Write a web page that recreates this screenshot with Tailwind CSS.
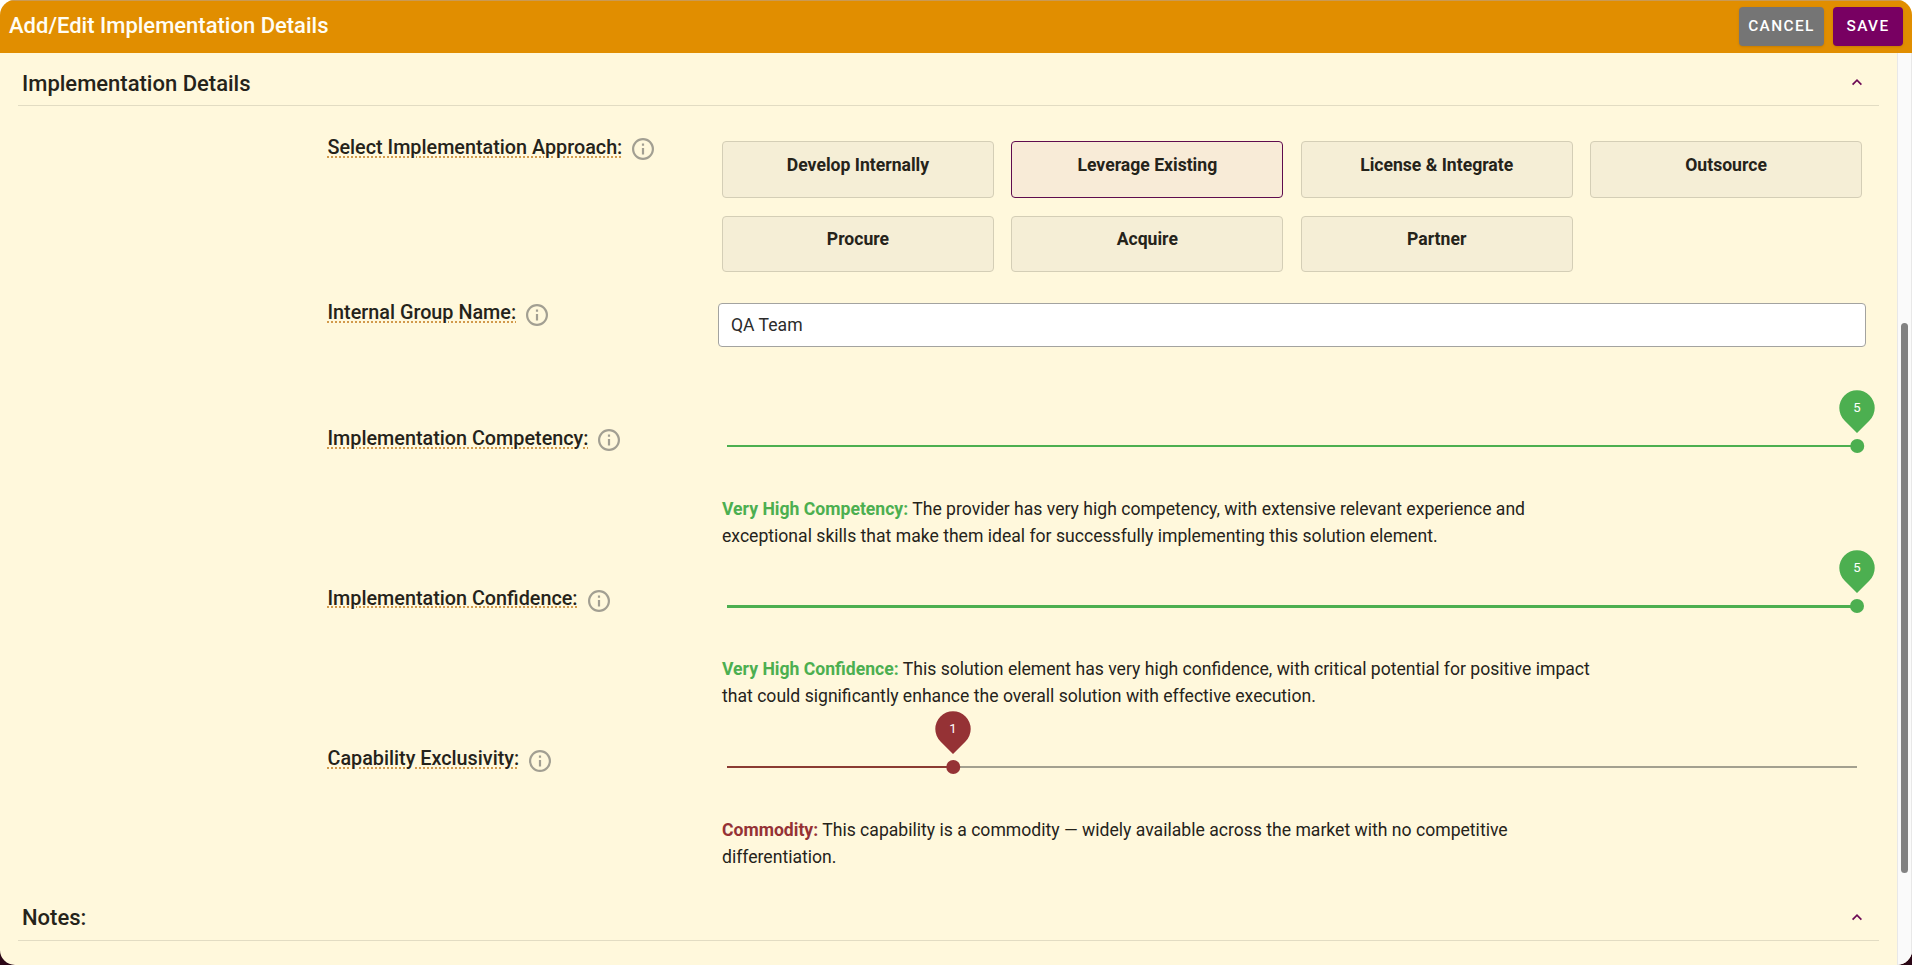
<!DOCTYPE html>
<html lang="en">
<head>
    <meta charset="UTF-8">
    <meta name="viewport" content="width=device-width, initial-scale=1.0">
    <title>Add/Edit Implementation Details</title>
    <script src="https://cdn.jsdelivr.net/npm/@tailwindcss/browser@4"></script>
</head>
<body class="h-[965px] overflow-hidden bg-[linear-gradient(to_bottom,#ffffff_50%,#2b0716_50%)] font-['Roboto',sans-serif] text-[#25231a]">
    <div class="flex h-[965px] flex-col overflow-hidden rounded-[15px] bg-[#fff8dc]">

        <!-- Toolbar -->
        <header class="flex h-[53px] shrink-0 items-start justify-between border-t border-[#c99a55] bg-[#e18e00] pr-[9px] pl-[9px]">
            <h1 class="mt-[11px] text-[22px] leading-[28px] font-medium text-[#fffdf4]">Add/Edit Implementation Details</h1>
            <div class="mt-[6px] flex gap-[9px]">
                <button class="h-[39px] w-[85px] rounded-[4px] bg-[#757575] text-[15.4px] font-medium tracking-[1.4px] text-white shadow">CANCEL</button>
                <button class="h-[39px] w-[70px] rounded-[4px] bg-[#780062] text-[15.4px] font-medium tracking-[1.4px] text-white shadow">SAVE</button>
            </div>
        </header>

        <div class="flex min-h-0 flex-1">
            <main class="w-[1897px] shrink-0">
                <!-- Implementation Details -->
                <div class="mr-[18px] ml-[18px] flex h-[53px] justify-between border-b border-[#e2dcc3] pr-[16px] pl-[4px]">
                    <h2 class="mt-[17px] text-[22px] leading-[28px] font-medium">Implementation Details</h2>
                    <svg class="mt-[25px] h-[8px] w-[12px]" viewBox="0 0 12 8" fill="none" stroke="#6d0a55" stroke-width="1.7"><path d="M1.6 6.6 6 2.2l4.4 4.4"/></svg>
                </div>

                <div class="flex h-[182px] pl-[327.5px]">
                    <div class="flex w-[394.5px] pt-[30px]">
                        <span class="text-[19.8px] leading-[24px] font-medium underline decoration-[#d29a4c] decoration-dotted decoration-[2px] underline-offset-[2px]">Select Implementation Approach:</span>
                        <svg class="mt-[2px] ml-[10px] size-[22px]" viewBox="2 2 20 20" fill="#a29f92"><path d="M11 9h2V7h-2m1 13c-4.41 0-8-3.59-8-8s3.59-8 8-8 8 3.59 8 8-3.59 8-8 8m0-18A10 10 0 0 0 2 12a10 10 0 0 0 10 10 10 10 0 0 0 10-10A10 10 0 0 0 12 2m-1 15h2v-6h-2v6z"/></svg>
                    </div>
                    <div class="grid w-[1140px] grid-cols-4 grid-rows-[57px_56px] gap-x-[17.5px] gap-y-[18px] pt-[35px] text-center text-[17.6px] leading-[24px] font-bold">
                        <div class="rounded-[4px] border border-[#d4ceb6] bg-[#f5eed6] pt-[11px]">Develop Internally</div>
                        <div class="rounded-[4px] border border-[#5f0c4e] bg-[#f8ebd7] pt-[11px]">Leverage Existing</div>
                        <div class="rounded-[4px] border border-[#d4ceb6] bg-[#f5eed6] pt-[11px]">License &amp; Integrate</div>
                        <div class="rounded-[4px] border border-[#d4ceb6] bg-[#f5eed6] pt-[11px]">Outsource</div>
                        <div class="rounded-[4px] border border-[#d4ceb6] bg-[#f5eed6] pt-[10px]">Procure</div>
                        <div class="rounded-[4px] border border-[#d4ceb6] bg-[#f5eed6] pt-[10px]">Acquire</div>
                        <div class="rounded-[4px] border border-[#d4ceb6] bg-[#f5eed6] pt-[10px]">Partner</div>
                    </div>
                </div>

                <div class="flex h-[102px] pl-[327.5px]">
                    <div class="flex w-[390.5px] pt-[13px]">
                        <span class="text-[19.8px] leading-[24px] font-medium underline decoration-[#d29a4c] decoration-dotted decoration-[2px] underline-offset-[2px]">Internal Group Name:</span>
                        <svg class="mt-[3px] ml-[10px] size-[22px]" viewBox="2 2 20 20" fill="#a29f92"><path d="M11 9h2V7h-2m1 13c-4.41 0-8-3.59-8-8s3.59-8 8-8 8 3.59 8 8-3.59 8-8 8m0-18A10 10 0 0 0 2 12a10 10 0 0 0 10 10 10 10 0 0 0 10-10A10 10 0 0 0 12 2m-1 15h2v-6h-2v6z"/></svg>
                    </div>
                    <input type="text" value="QA Team" class="mt-[15px] h-[44px] w-[1148px] rounded-[4px] border border-[#a3a3a0] bg-white px-[12px] pb-[1px] text-[17.6px] text-[#2b2b2b]">
                </div>

                <!-- Implementation Competency -->
                <div class="flex h-[160.5px] pl-[327.5px]">
                    <div class="flex w-[394.5px] pt-[37px]">
                        <span class="h-[24px] text-[19.8px] leading-[24px] font-medium underline decoration-[#d29a4c] decoration-dotted decoration-[2px] underline-offset-[2px]">Implementation Competency:</span>
                        <svg class="mt-[2px] ml-[10px] size-[22px]" viewBox="2 2 20 20" fill="#a29f92"><path d="M11 9h2V7h-2m1 13c-4.41 0-8-3.59-8-8s3.59-8 8-8 8 3.59 8 8-3.59 8-8 8m0-18A10 10 0 0 0 2 12a10 10 0 0 0 10 10 10 10 0 0 0 10-10A10 10 0 0 0 12 2m-1 15h2v-6h-2v6z"/></svg>
                    </div>
                    <div class="w-[1136px]">
                        <div class="relative mt-[55px] ml-[5px] h-[2px] w-[1130px] bg-[#4caf50]">
                            <span class="absolute -top-[6px] left-full size-[13.5px] -translate-x-1/2 rounded-full bg-[#4caf50]"></span>
                            <svg class="absolute -top-[55px] left-full h-[44px] w-[36px] -translate-x-1/2" viewBox="0 0 36 44"><path fill="#4caf50" d="M18 43 5.5 30.5a17.7 17.7 0 1 1 25 0z"/></svg>
                            <span class="absolute -top-[47px] left-full w-[36px] -translate-x-1/2 text-center text-[13.2px] leading-[20px] text-white">5</span>
                        </div>
                        <p class="mt-[49px] w-[880px] text-[17.6px] leading-[26.6px]"><b class="font-bold text-[#4caf50]">Very High Competency:</b> The provider has very high competency, with extensive relevant experience and exceptional skills that make them ideal for successfully implementing this solution element.</p>
                    </div>
                </div>

                <!-- Implementation Confidence -->
                <div class="flex h-[160.5px] pl-[327.5px]">
                    <div class="flex w-[394.5px] pt-[36px]">
                        <span class="h-[24px] text-[19.8px] leading-[24px] font-medium underline decoration-[#d29a4c] decoration-dotted decoration-[2px] underline-offset-[2px]">Implementation Confidence:</span>
                        <svg class="mt-[3px] ml-[10px] size-[22px]" viewBox="2 2 20 20" fill="#a29f92"><path d="M11 9h2V7h-2m1 13c-4.41 0-8-3.59-8-8s3.59-8 8-8 8 3.59 8 8-3.59 8-8 8m0-18A10 10 0 0 0 2 12a10 10 0 0 0 10 10 10 10 0 0 0 10-10A10 10 0 0 0 12 2m-1 15h2v-6h-2v6z"/></svg>
                    </div>
                    <div class="w-[1136px]">
                        <div class="relative mt-[54.5px] ml-[5px] h-[3px] w-[1130px] bg-[#4caf50]">
                            <span class="absolute -top-[6px] left-full size-[14px] -translate-x-1/2 rounded-full bg-[#4caf50]"></span>
                            <svg class="absolute -top-[55px] left-full h-[44px] w-[36px] -translate-x-1/2" viewBox="0 0 36 44"><path fill="#4caf50" d="M18 43 5.5 30.5a17.7 17.7 0 1 1 25 0z"/></svg>
                            <span class="absolute -top-[47px] left-full w-[36px] -translate-x-1/2 text-center text-[13.2px] leading-[20px] text-white">5</span>
                        </div>
                        <p class="mt-[48.4px] w-[880px] text-[17.6px] leading-[26.4px]"><b class="font-bold text-[#4caf50]">Very High Confidence:</b> This solution element has very high confidence, with critical potential for positive impact that could significantly enhance the overall solution with effective execution.</p>
                    </div>
                </div>

                <!-- Capability Exclusivity -->
                <div class="flex h-[161px] pl-[327.5px]">
                    <div class="flex w-[394.5px] pt-[36px]">
                        <span class="h-[24px] text-[19.8px] leading-[24px] font-medium underline decoration-[#d29a4c] decoration-dotted decoration-[2px] underline-offset-[2px]">Capability Exclusivity:</span>
                        <svg class="mt-[3px] ml-[10px] size-[22px]" viewBox="2 2 20 20" fill="#a29f92"><path d="M11 9h2V7h-2m1 13c-4.41 0-8-3.59-8-8s3.59-8 8-8 8 3.59 8 8-3.59 8-8 8m0-18A10 10 0 0 0 2 12a10 10 0 0 0 10 10 10 10 0 0 0 10-10A10 10 0 0 0 12 2m-1 15h2v-6h-2v6z"/></svg>
                    </div>
                    <div class="w-[1136px]">
                        <div class="relative mt-[55px] ml-[5px] h-[2px] w-[1130px] bg-[#a3a08f]">
                            <div class="relative h-[2px] w-1/5 bg-[#8b3c33]">
                                <span class="absolute -top-[6px] left-full size-[13.5px] -translate-x-1/2 rounded-full bg-[#953235]"></span>
                                <svg class="absolute -top-[55px] left-full h-[44px] w-[36px] -translate-x-1/2" viewBox="0 0 36 44"><path fill="#953235" d="M18 43 5.5 30.5a17.7 17.7 0 1 1 25 0z"/></svg>
                                <span class="absolute -top-[47px] left-full w-[36px] -translate-x-1/2 text-center text-[13.2px] leading-[20px] text-white">1</span>
                            </div>
                        </div>
                        <p class="mt-[49px] w-[880px] text-[17.6px] leading-[26.6px]"><b class="font-bold text-[#953235]">Commodity:</b> This capability is a commodity — widely available across the market with no competitive differentiation.</p>
                    </div>
                </div>

                <!-- Notes -->
                <div class="mr-[18px] ml-[18px] flex h-[69px] justify-between border-b border-[#e2dcc3] pr-[16px] pl-[4px]">
                    <h2 class="mt-[32px] text-[22px] leading-[28px] font-medium">Notes:</h2>
                    <svg class="mt-[41px] h-[8px] w-[12px]" viewBox="0 0 12 8" fill="none" stroke="#6d0a55" stroke-width="1.7"><path d="M1.6 6.6 6 2.2l4.4 4.4"/></svg>
                </div>
            </main>

            <!-- Scrollbar -->
            <div class="w-[15px] border-r border-l border-[#e8e8e8] bg-[#fafafa] pt-[270px] pl-[3px]">
                <div class="h-[550px] w-[7px] rounded-full bg-[#828282]"></div>
            </div>
        </div>
    </div>
</body>
</html>
